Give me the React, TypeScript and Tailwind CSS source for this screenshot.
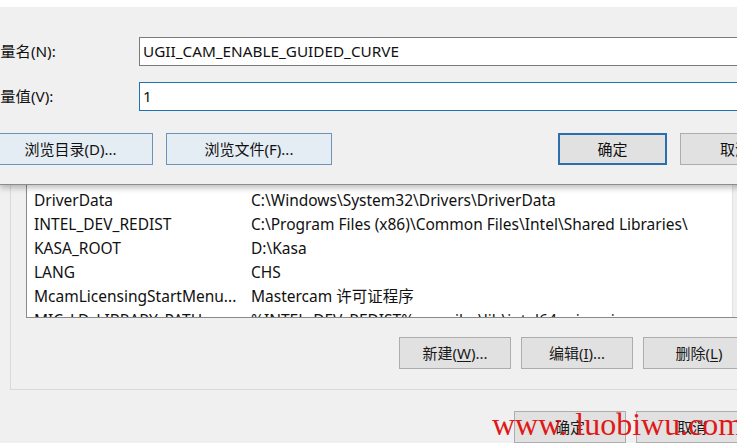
import React from "react";

const FONT = { fontFamily: '"Noto Sans", "Noto Sans CJK SC", sans-serif' };

const rows: [string, string][] = [
  ["DriverData", "C:\\Windows\\System32\\Drivers\\DriverData"],
  ["INTEL_DEV_REDIST", "C:\\Program Files (x86)\\Common Files\\Intel\\Shared Libraries\\"],
  ["KASA_ROOT", "D:\\Kasa"],
  ["LANG", "CHS"],
  ["McamLicensingStartMenu...", "Mastercam 许可证程序"],
  ["MIC_LD_LIBRARY_PATH", "%INTEL_DEV_REDIST%compiler\\lib\\intel64_win_mic"],
];

function Btn({ children, className = "" }: { children: React.ReactNode; className?: string }) {
  return (
    <div
      className={
        "flex items-center justify-center h-[32px] border border-[#adadad] bg-[#e1e1e1] text-[15px] text-[#1a1a1a] shrink-0 " +
        className
      }
    >
      {children}
    </div>
  );
}

export default function App() {
  return (
    <div
      className="relative w-[737px] h-[443px] overflow-hidden bg-[#f0f0f0] text-[#111]"
      style={FONT}
    >
      {/* Main window (behind) */}
      <div className="flex flex-col pt-[120px]">
        <div className="ml-[10px] mr-[-40px] border-l border-b border-[#d9d9d9] flex flex-col pl-[15px] pb-[20px]">
          {/* List box */}
          <div className="flex h-[198px] border-l border-b border-[#8a8a8a] bg-white">
            <div className="flex-1 overflow-hidden pt-[68px]">
              {rows.map(([a, b]) => (
                <div
                  key={a}
                  className="flex h-[24px] items-center text-[15.5px] leading-[24px] whitespace-nowrap"
                >
                  <div className="w-[224px] pl-[7px] shrink-0">{a}</div>
                  <div>{b}</div>
                </div>
              ))}
            </div>
            <div className="w-[45px] shrink-0 border-l border-[#e2e2e2] bg-[#f0f0f0]" />
          </div>
          {/* Buttons */}
          <div className="flex gap-[10px] mt-[19px] pl-[373px]">
            <Btn className="w-[112px]">
              新建(<span className="underline underline-offset-2">W</span>)...
            </Btn>
            <Btn className="w-[112px]">
              编辑(<span className="underline underline-offset-2">I</span>)...
            </Btn>
            <Btn className="w-[112px]">
              删除(<span className="underline underline-offset-2">L</span>)
            </Btn>
          </div>
        </div>
        <div className="flex gap-[10px] mt-[21px] pl-[514px]">
          <Btn className="w-[112px]">确定</Btn>
          <Btn className="w-[112px]">取消</Btn>
        </div>
      </div>

      {/* Edit dialog overlay */}
      <div className="absolute left-0 top-0 w-[800px] h-[185px] flex flex-col bg-[#f0f0f0] border-b border-[#8c8c8c] shadow-[0_3px_6px_rgba(0,0,0,0.25)]">
        <div className="h-[7px] bg-white" />
        <div className="flex items-center mt-[30px] h-[29px]">
          <div className="w-[154px] ml-[-15px] text-[15.3px] whitespace-nowrap">变量名(N):</div>
          <div className="flex-1 h-[29px] border border-[#7a7a7a] bg-white flex items-center pl-[3px] text-[15.3px]">
            UGII_CAM_ENABLE_GUIDED_CURVE
          </div>
        </div>
        <div className="flex items-center mt-[16px] h-[29px]">
          <div className="w-[154px] ml-[-15px] text-[15.3px] whitespace-nowrap">变量值(V):</div>
          <div className="flex-1 h-[29px] border border-[#1f74b0] bg-white flex items-center pl-[3px] text-[15.3px]">
            1
          </div>
        </div>
        <div className="flex items-center mt-[22px] ml-[-12px]">
          <div className="flex items-center justify-center w-[165px] h-[32px] border border-[#6e93b8] bg-[#e4ecf4] text-[15px]">
            浏览目录(D)...
          </div>
          <div className="flex items-center justify-center w-[166px] h-[32px] ml-[13px] border border-[#6e93b8] bg-[#e4ecf4] text-[15px]">
            浏览文件(F)...
          </div>
          <div className="flex items-center justify-center w-[109px] h-[32px] ml-[226px] border-2 border-[#2c6fae] bg-[#e1e1e1] text-[15px]">
            确定
          </div>
          <div className="flex items-center justify-center w-[110px] h-[32px] ml-[13px] border border-[#adadad] bg-[#e1e1e1] text-[15px]">
            取消
          </div>
        </div>
      </div>

      {/* Watermark */}
      <div
        className="absolute left-[492px] top-[404px] text-[32px] leading-[40px] text-[#e01818] whitespace-nowrap"
        style={{ fontFamily: '"Liberation Serif", serif' }}
      >
        www. luobiwu.com
      </div>
    </div>
  );
}
